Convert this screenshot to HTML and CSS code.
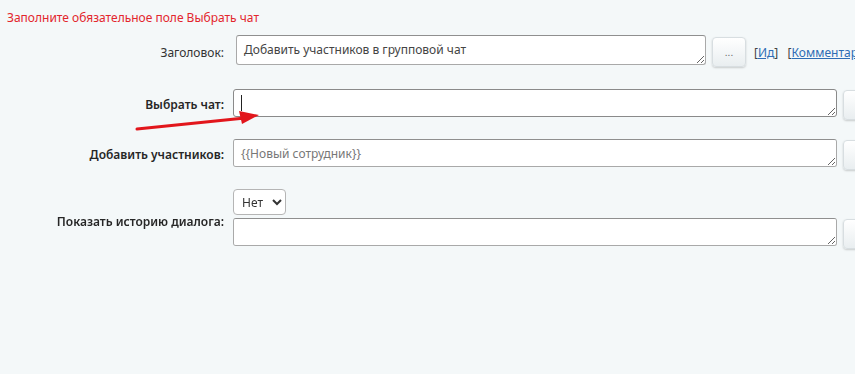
FILE: index.html
```html
<!DOCTYPE html>
<html lang="ru">
<head>
    <meta charset="UTF-8">
    <meta name="viewport" content="width=device-width, initial-scale=1.0">
    <link rel="stylesheet" href="styles.css">
</head>
<body>

    <div class="error">Заполните обязательное поле Выбрать чат</div>

    <div class="form">
        <div class="row row-title">
            <label class="label label-plain">Заголовок:</label>
            <div class="field">
                <textarea class="input input-short">Добавить участников в групповой чат</textarea>
                <button class="dots">...</button>
                <span class="links">[<a href="#">Ид</a>]&nbsp;&nbsp; [<a href="#">Комментарий</a>]</span>
            </div>
        </div>

        <div class="row">
            <label class="label">Выбрать чат:</label>
            <div class="field">
                <textarea class="input input-long focused"></textarea>
                <button class="dots">...</button>
            </div>
        </div>

        <div class="row">
            <label class="label">Добавить участников:</label>
            <div class="field">
                <textarea class="input input-long muted">{{Новый сотрудник}}</textarea>
                <button class="dots">...</button>
            </div>
        </div>

        <div class="row row-history">
            <label class="label">Показать историю диалога:</label>
            <div class="field-stack">
                <select class="select">
                    <option>Нет</option>
                    <option>Да</option>
                </select>
                <div class="field">
                    <textarea class="input input-long"></textarea>
                    <button class="dots">...</button>
                </div>
            </div>
        </div>

        <svg class="arrow" width="130" height="24" viewBox="0 0 130 24">
            <line x1="2" y1="20" x2="110" y2="9" stroke="#e2161c" stroke-width="3" stroke-linecap="round"/>
            <polygon points="104,2 124,6 107,15" fill="#e2161c"/>
        </svg>
    </div>

</body>
</html>
```

FILE: styles.css
```css
body {
    margin: 0;
    background-color: #f4f8f9;
    font-family: "Noto Sans", "Open Sans", sans-serif;
    font-size: 12px;
    color: #333;
    overflow: hidden;
}
.error {
    color: #e3262d;
    padding: 9px 7px 0;
    line-height: 17px;
}
.form {
    position: relative;
    padding-top: 9px;
}
.row {
    display: flex;
    align-items: center;
    margin-bottom: 19px;
}
.row-title {
    margin-bottom: 22px;
}
.label {
    width: 224px;
    flex-shrink: 0;
    text-align: right;
    padding-right: 9px;
    font-weight: 600;
    color: #262626;
    white-space: nowrap;
}
.label-plain {
    font-weight: 400;
    color: #333;
    padding-top: 3px;
}
.row-title .label {
    padding-right: 12px;
}
.field {
    display: flex;
    align-items: flex-start;
    white-space: nowrap;
}
.field-stack {
    display: flex;
    flex-direction: column;
    align-items: flex-start;
    gap: 3px;
}
.row-history .label {
    padding-top: 4px;
}
.input {
    box-sizing: border-box;
    height: 28px;
    padding: 5px 7px;
    font-family: inherit;
    font-size: 12px;
    color: #444;
    background-color: #fff;
    border: 1px solid #a9a9a9;
    border-top-color: #8f8f8f;
    border-radius: 3px;
    resize: vertical;
    flex-shrink: 0;
}
.input-short {
    width: 470px;
    height: 30px;
}
.input-long {
    width: 604px;
}
.muted {
    color: #777;
}
.focused {
    border-color: #8a8a8a;
    background-image: linear-gradient(#222, #222);
    background-size: 1px 16px;
    background-position: 7px 5px;
    background-repeat: no-repeat;
}
.dots {
    box-sizing: border-box;
    width: 34px;
    height: 30px;
    margin: 1px 0 0 6px;
    flex-shrink: 0;
    font-size: 10px;
    color: #666;
    background: linear-gradient(#ffffff, #e9eef0);
    border: 1px solid #d8dee1;
    border-radius: 4px;
    box-shadow: 0 1px 2px rgba(0, 0, 0, 0.18);
    cursor: pointer;
}
.row-title .dots {
    margin-top: 2px;
}
.links {
    margin: 9px 0 0 8px;
    color: #444;
}
.links a {
    color: #2f6db5;
}
.select {
    height: 26px;
    width: 53px;
    padding: 0 4px;
    font-family: inherit;
    font-size: 12px;
    color: #333;
    background-color: #fff;
    border: 1px solid #b5b5b5;
    border-radius: 4px;
}
.arrow {
    position: absolute;
    left: 135px;
    top: 83px;
}
```
